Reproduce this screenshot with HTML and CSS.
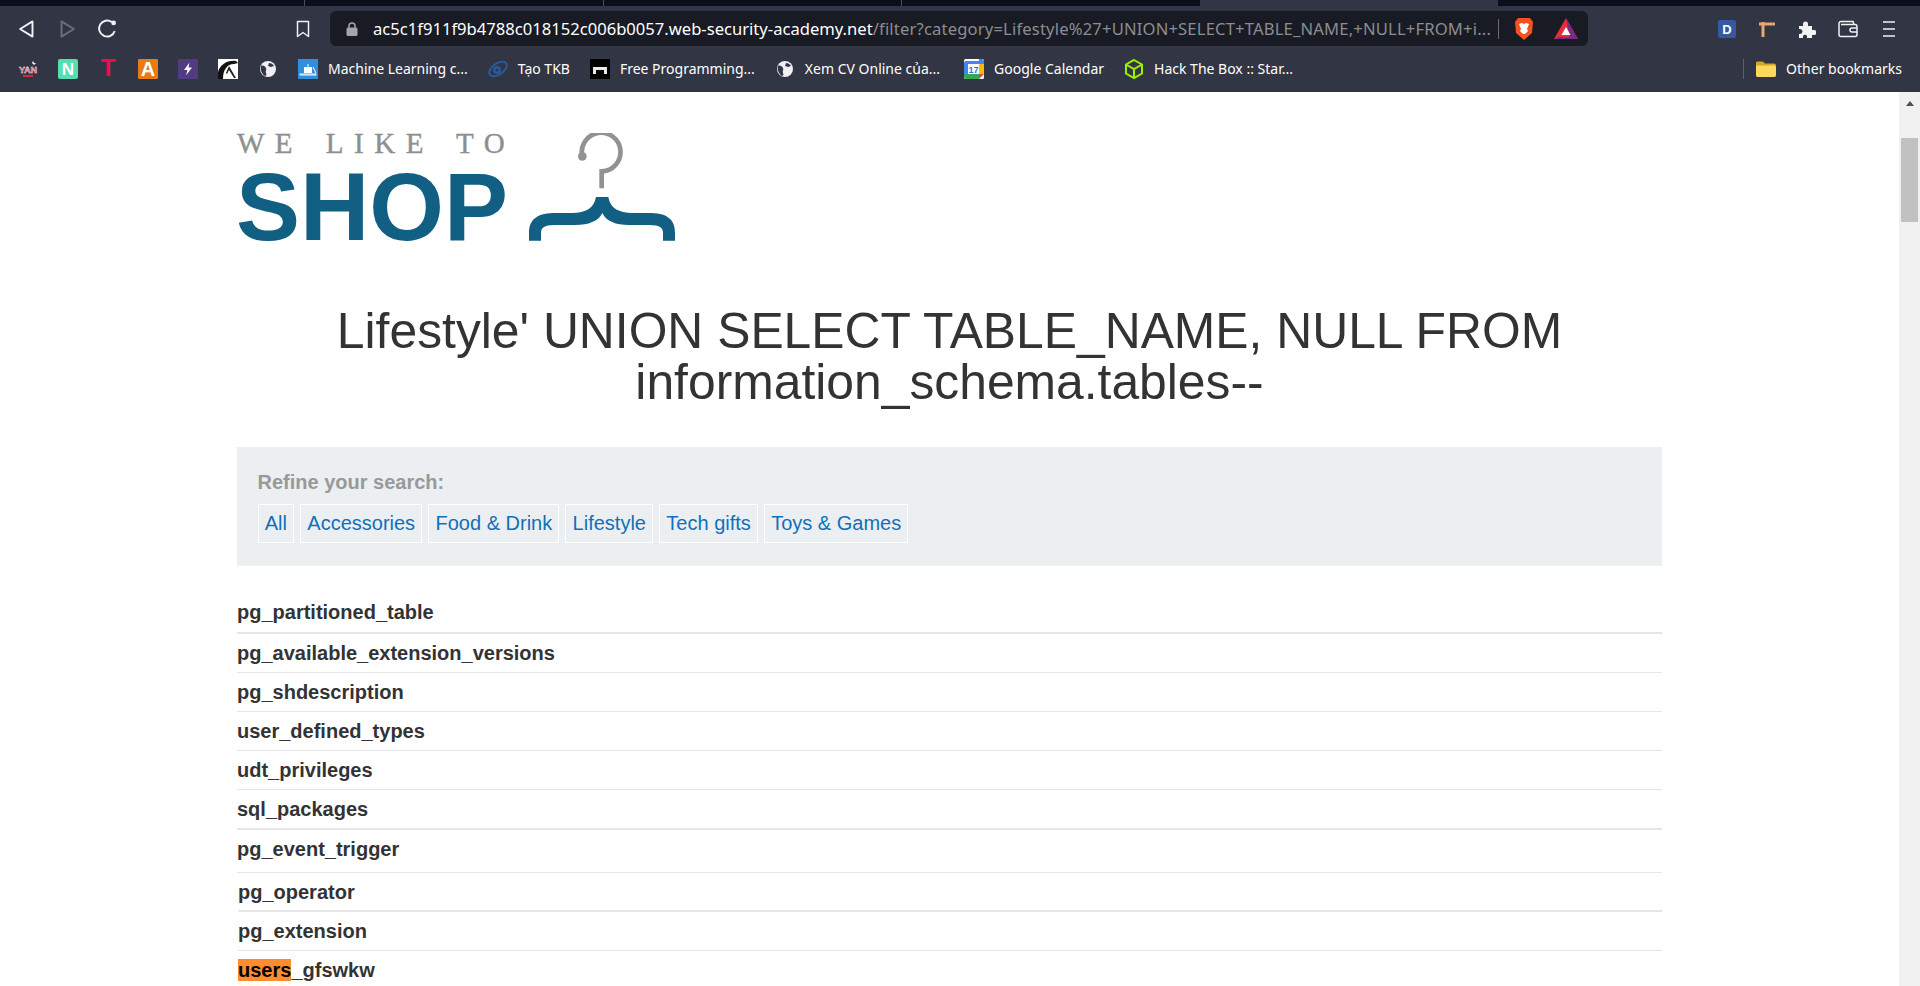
FILE: index.html
```html
<!DOCTYPE html>
<html lang="en">
<head>
  <meta charset="UTF-8" />
  <title>Filter: Lifestyle</title>
  <link rel="stylesheet" href="styles.css">
</head>
<body>
  <div class="tabstrip">
    <div class="tab tab-a"></div>
    <div class="tab tab-b"></div>
    <div class="tab tab-c"></div>
    <div class="tab tab-active"></div>
    <div class="tab tab-rest"></div>
  </div>

  <div class="toolbar">
    <div class="nav">
      <svg class="nav-icon" viewBox="0 0 16 16"><path d="M12 2.500v11L3 8z" fill="none" stroke="#f1f1f3" stroke-width="1.400" stroke-linejoin="round"/></svg>
      <svg class="nav-icon" viewBox="0 0 16 16"><path d="M4 2.500v11L13 8z" fill="none" stroke="#6b6e78" stroke-width="1.400" stroke-linejoin="round"/></svg>
      <svg class="nav-icon" viewBox="0 0 16 16"><path d="M13.600 9.400A5.800 5.800 0 1 1 11.500 3" fill="none" stroke="#f1f1f3" stroke-width="1.400"/><circle cx="12.800" cy="3.600" r="1.700" fill="#f1f1f3"/></svg>
    </div>
    <svg class="star" viewBox="0 0 14 18"><path d="M1.500 1.500h11v15L7 12.500l-5.500 4z" fill="none" stroke="#f1f1f3" stroke-width="1.500" stroke-linejoin="round"/></svg>
    <div class="urlbar">
      <svg class="lock" viewBox="0 0 12 14"><path d="M3 6V4a3 3 0 0 1 6 0v2" fill="none" stroke="#a3a5ab" stroke-width="1.500"/><rect x="0.500" y="5.500" width="11" height="8.500" rx="1.500" fill="#a3a5ab"/></svg>
      <div class="url"><span class="host">ac5c1f911f9b4788c018152c006b0057.web-security-academy.net</span>/filter?category=Lifestyle%27+UNION+SELECT+TABLE_NAME,+NULL+FROM+i...</div>
      <span class="url-sep"></span>
      <svg class="brave" viewBox="0 0 20 24"><path d="M4 1h12l3 4-1 11-8 7-8-7L1 5z" fill="#f4511e"/><path d="M5 7l3-1 2 1 2-1 3 1-2 5 1 2-3 3h-2l-3-3 1-2z" fill="#fff"/></svg>
      <svg class="bat" viewBox="0 0 24 22"><path d="M12 0L24 21H0z" fill="#e2303a"/><path d="M12 0L24 21H16z" fill="#7b2a86"/><path d="M0 21l5-2h14l5 2z" fill="#7b2a86"/><path d="M12 9l4.500 8h-9z" fill="#fff"/></svg>
    </div>
    <div class="ext">
      <svg class="ext-icon" viewBox="0 0 18 18"><rect width="18" height="18" rx="2" fill="#35589f"/><text x="9" y="14" class="ext-d">D</text></svg>
      <svg class="ext-icon" viewBox="0 0 18 18"><path d="M5 2v15M1 4h16" stroke="#e8a673" stroke-width="3" fill="none"/></svg>
      <svg class="ext-icon" viewBox="0 0 18 18"><path d="M1 6h4V4a2.500 2.500 0 0 1 5 0v2h4v4h2a2.500 2.500 0 0 1 0 5h-2v3H9v-2a2.200 2.200 0 0 0-4 0v2H1v-4h1a2.500 2.500 0 0 0 0-5H1z" fill="#f3f3f5"/></svg>
      <svg class="ext-icon ext-wide" viewBox="0 0 20 18"><path d="M3 1.500h12l1 3M3 1.500a2 2 0 0 0-2 2v11a2 2 0 0 0 2 2h14a2 2 0 0 0 2-2v-8a2 2 0 0 0-2-2H3M19 8h-5a2 2 0 0 0 0 4h5" fill="none" stroke="#f1f1f3" stroke-width="1.500"/></svg>
      <svg class="ext-icon" viewBox="0 0 18 18"><path d="M3 2h12M3 9h12M3 16h12" stroke="#f1f1f3" stroke-width="1.500"/></svg>
    </div>
  </div>

  <div class="bookmarks">
    <a class="bm"><svg class="fav" viewBox="0 0 20 20"><text x="10" y="14" class="fav-yan">YAN</text><path d="M15 2l1 2 2 0-2 2-2-2z" fill="#fff"/><rect x="5" y="16" width="10" height="2" fill="#d9283c"/></svg></a>
    <a class="bm"><svg class="fav" viewBox="0 0 20 20"><rect width="20" height="20" rx="2" fill="#55dfb0"/><text x="10" y="16" class="fav-n">N</text></svg></a>
    <a class="bm"><svg class="fav" viewBox="0 0 20 20"><text x="10" y="16.500" class="fav-t">T</text></svg></a>
    <a class="bm"><svg class="fav" viewBox="0 0 20 20"><rect width="20" height="20" rx="1" fill="#e97b12"/><text x="10" y="17" class="fav-a">A</text></svg></a>
    <a class="bm"><svg class="fav" viewBox="0 0 20 20"><rect width="20" height="20" fill="#523b80"/><path d="M11.500 3.500L6 11h3.500L8 16.500 14 8.500h-3.500z" fill="#fff"/></svg></a>
    <a class="bm"><svg class="fav" viewBox="0 0 20 20"><rect width="20" height="20" fill="#fff"/><path d="M0 20V13C2 6 9 1 18 2l2 2-4 1C9 5 5 11 5 20z" fill="#111"/><path d="M8 14l3-7 7 12h-2l-5-8-2 4z" fill="#222"/></svg></a>
    <a class="bm"><svg class="fav" viewBox="0 0 20 20"><circle cx="10" cy="10" r="8" fill="#f0f0f2"/><path d="M3 7c2-1 4 0 5 2s-1 3 0 5 0 3-1 3c-3-2-5-6-4-10zM11 4c2 0 4 1 5 3l-3 1-3-1z" fill="#32364a"/></svg></a>
    <a class="bm"><svg class="fav" viewBox="0 0 20 20"><rect width="20" height="20" fill="#2f8ede"/><rect x="6" y="8" width="8" height="6" fill="#fff"/><path d="M2 15h16v1H2zM10 5v3M15 8l3 6" stroke="#fff" fill="none"/></svg><span>Machine Learning c...</span></a>
    <a class="bm"><svg class="fav" viewBox="0 0 20 20"><ellipse cx="10" cy="10" rx="10" ry="5.500" transform="rotate(-35 10 10)" fill="none" stroke="#2b5a9c" stroke-width="2"/><circle cx="9" cy="11" r="4" fill="#2b5a9c"/><circle cx="9" cy="11" r="1.500" fill="#32364a"/></svg><span>Tạo TKB</span></a>
    <a class="bm"><svg class="fav" viewBox="0 0 20 20"><rect width="20" height="20" fill="#000"/><path d="M3 15V8h14v7h-3v-4H6v4z" fill="#e8e8e8"/></svg><span>Free Programming...</span></a>
    <a class="bm"><svg class="fav" viewBox="0 0 20 20"><circle cx="10" cy="10" r="8" fill="#f0f0f2"/><path d="M3 7c2-1 4 0 5 2s-1 3 0 5 0 3-1 3c-3-2-5-6-4-10zM11 4c2 0 4 1 5 3l-3 1-3-1z" fill="#32364a"/></svg><span>Xem CV Online của...</span></a>
    <a class="bm bm-cal"><svg class="fav" viewBox="0 0 20 20"><rect width="20" height="20" rx="1.500" fill="#fff"/><path d="M0 4a2 2 0 0 1 2-2h13v3H4v11H0z" fill="#4285f4"/><path d="M15 0h3a2 2 0 0 1 2 2v13h-5z" fill="#4285f4"/><path d="M15 5h5v10h-5z" fill="#fbbc04"/><path d="M0 15h15v5H2a2 2 0 0 1-2-2z" fill="#34a853"/><path d="M15 15h5l-5 5z" fill="#ea4335"/><text x="9.500" y="14" class="fav-cal">17</text></svg><span>Google Calendar</span></a>
    <a class="bm"><svg class="fav" viewBox="0 0 20 20"><path d="M10 1l8 4.500v9L10 19l-8-4.500v-9zM2 5.500l8 4.500 8-4.500M10 10v9" fill="none" stroke="#9fef00" stroke-width="2"/></svg><span>Hack The Box :: Star...</span></a>
    <div class="bm-other">
      <span class="bm-sep"></span>
      <a class="bm"><svg class="fav" viewBox="0 0 20 18"><path d="M1 1.500h6l2 2h9a2 2 0 0 1 2 2V15a2 2 0 0 1-2 2H2a2 2 0 0 1-2-2V2.500z" fill="#d6a526"/><path d="M0 5.500h18.500a1.500 1.500 0 0 1 1.500 1.500v8a2 2 0 0 1-2 2H2a2 2 0 0 1-2-2z" fill="#fbd95f"/></svg><span>Other bookmarks</span></a>
    </div>
  </div>

  <div class="viewport">
    <div class="page">
      <div class="logo">
        <div class="logo-text">
          <div class="logo-top">WE LIKE TO</div>
          <div class="logo-shop">SHOP</div>
        </div>
        <svg class="hanger" viewBox="0 0 438 324">
          <path d="M160 70A58 58 0 1 1 218 115V166" fill="none" stroke="#929292" stroke-width="14"/>
          <circle cx="160" cy="70" r="13" fill="#929292"/>
          <path d="M0 323V300C0 255 30 240 80 240H130C170 240 195 225 201 192H238C243 225 270 240 310 240H360C410 240 438 255 438 300V323H402V300C402 285 395 276 360 276H300C260 276 232 265 220 240C208 265 178 276 140 276H75C45 276 36 285 36 300V323Z" fill="#125f84"/>
        </svg>
      </div>

      <h1>Lifestyle' UNION SELECT TABLE_NAME, NULL FROM information_schema.tables--</h1>

      <section class="filters">
        <div class="filters-label">Refine your search:</div>
        <div class="filters-list">
          <a>All</a>
          <a>Accessories</a>
          <a>Food &amp; Drink</a>
          <a>Lifestyle</a>
          <a>Tech gifts</a>
          <a>Toys &amp; Games</a>
        </div>
      </section>

      <div class="results">
        <div class="row thick">pg_partitioned_table</div>
        <div class="row">pg_available_extension_versions</div>
        <div class="row">pg_shdescription</div>
        <div class="row">user_defined_types</div>
        <div class="row">udt_privileges</div>
        <div class="row thick">sql_packages</div>
        <div class="row tall">pg_event_trigger</div>
        <div class="row shifted thick">pg_operator</div>
        <div class="row shifted">pg_extension</div>
        <div class="row shifted"><mark>users</mark>_gfswkw</div>
      </div>
    </div>
    <div class="scrollbar">
      <div class="scroll-up"></div>
      <div class="scroll-thumb"></div>
    </div>
  </div>
</body>
</html>
```

FILE: styles.css
```css
* {
  margin: 0;
  padding: 0;
  box-sizing: border-box;
}
html, body {
  height: 100%;
  overflow: hidden;
}
body {
  display: flex;
  flex-direction: column;
  background: #fff;
  font-family: "Liberation Sans", Arial, sans-serif;
  color: #333;
}

/* browser chrome */
.tabstrip {
  display: flex;
  height: 6px;
  background: #0c0d1a;
}
.tab {
  height: 6px;
  border-right: 1px solid #4a4c58;
}
.tab-a { width: 305px; }
.tab-b { width: 299px; }
.tab-c { width: 298px; }
.tab-active {
  width: 298px;
  margin-left: 298px;
  background: #323644;
  border: none;
}
.tab-rest { border: none; }

.toolbar {
  display: flex;
  align-items: center;
  height: 46px;
  padding: 5px 0 6px 0;
  background: #323644;
}
.nav {
  display: flex;
  gap: 18px;
  padding-left: 16px;
}
.nav-icon {
  width: 22px;
  height: 22px;
}
.star {
  flex: none;
  width: 14px;
  height: 18px;
  margin-left: 178px;
}
.urlbar {
  display: flex;
  align-items: center;
  width: 1258px;
  height: 35px;
  margin-left: 20px;
  background: #181b23;
  border-radius: 6px;
}
.lock {
  width: 12px;
  height: 14px;
  margin-left: 16px;
}
.url {
  margin-left: 15px;
  width: 1119px;
  font-family: "Noto Sans", sans-serif;
  font-size: 16.600px;
  letter-spacing: 0.170px;
  color: #8b8d92;
  white-space: nowrap;
  overflow: hidden;
}
.host {
  letter-spacing: 0;
  color: #fff;
}
.url-sep {
  width: 1px;
  height: 20px;
  margin-left: 6px;
  background: #6b6d75;
}
.brave {
  width: 20px;
  height: 24px;
  margin-left: 15px;
}
.bat {
  width: 24px;
  height: 22px;
  margin-left: 20px;
}
.ext {
  display: flex;
  align-items: center;
  gap: 22px;
  margin-left: 130px;
}
.ext-icon {
  width: 18px;
  height: 18px;
}
.ext-wide {
  width: 20px;
}
.ext-d {
  font: bold 13px "Liberation Sans", sans-serif;
  fill: #fff;
  text-anchor: middle;
}

.bookmarks {
  display: flex;
  align-items: center;
  height: 40px;
  padding: 0 8px 7px 8px;
  background: #323644;
}
.bm {
  display: flex;
  align-items: center;
  gap: 10px;
  padding: 0 10px;
  font-family: "Noto Sans", sans-serif;
  font-size: 14px;
  color: #fff;
  white-space: nowrap;
}
.bm-cal {
  margin-left: 4px;
}
.fav {
  flex: none;
  width: 20px;
  height: 20px;
  overflow: visible;
}
.fav-yan {
  font: bold 9px "Liberation Sans", sans-serif;
  fill: #d9283c;
  stroke: #fff;
  stroke-width: 0.400;
  text-anchor: middle;
}
.fav-n {
  font: bold 17px "Liberation Sans", sans-serif;
  fill: #fff;
  text-anchor: middle;
}
.fav-t {
  font: bold 24px "Liberation Sans", sans-serif;
  fill: #f50a50;
  text-anchor: middle;
}
.fav-a {
  font: bold 20px "Liberation Sans", sans-serif;
  fill: #fff;
  text-anchor: middle;
}
.fav-cal {
  font: bold 9px "Liberation Sans", sans-serif;
  fill: #1a73e8;
  text-anchor: middle;
}
.bm-other {
  display: flex;
  align-items: center;
  margin-left: auto;
}
.bm-sep {
  width: 1px;
  height: 20px;
  margin-right: 2px;
  background: #5c5f6b;
}

/* page */
.viewport {
  flex: 1;
  display: flex;
  min-height: 0;
}
.page {
  flex: 1;
  padding: 40px 237px 0 237px;
  overflow: hidden;
}
.scrollbar {
  width: 21px;
  padding: 0 2px;
  background: #f1f1f1;
}
.scroll-up {
  width: 0;
  height: 0;
  margin: 9px auto 32px auto;
  border-left: 4.500px solid transparent;
  border-right: 4.500px solid transparent;
  border-bottom: 5px solid #505050;
}
.scroll-thumb {
  height: 84px;
  background: #c1c1c1;
}

.logo {
  display: flex;
  align-items: flex-end;
  gap: 24px;
  height: 112px;
}
.logo-text {
  flex: none;
  width: 268px;
}
.logo-top {
  margin-bottom: 15px;
  font-family: "Liberation Serif", serif;
  font-size: 29px;
  line-height: 24px;
  letter-spacing: 10.500px;
  word-spacing: 5px;
  color: #8f8f8f;
  -webkit-text-stroke: 0.400px #8f8f8f;
  white-space: nowrap;
}
.logo-shop {
  margin-left: -1px;
  font-size: 96px;
  font-weight: bold;
  line-height: 74px;
  color: #125f84;
}
.hanger {
  width: 146px;
  height: 108px;
  margin-bottom: 3px;
}

h1 {
  margin: 62px 0 38.500px 0;
  font-size: 49.800px;
  font-weight: normal;
  line-height: 51px;
  text-align: center;
  color: #333;
}

.filters {
  height: 119px;
  padding: 24px 21px 0 20.500px;
  background: #ebeff2;
}
.filters-label {
  height: 33px;
  font-size: 20px;
  font-weight: bold;
  line-height: 22px;
  color: #999;
}
.filters-list {
  display: flex;
  gap: 6px;
}
.filters-list a {
  padding: 0 6.200px;
  font-size: 20px;
  line-height: 37px;
  color: #0f71bb;
  border: 1px solid #fff;
}

.results {
  margin-top: 29px;
}
.row {
  height: 39.200px;
  padding-top: 7px;
  font-size: 20px;
  font-weight: bold;
  line-height: 24px;
  color: #333;
  border-bottom: 1px solid #e6e6e6;
}
.row:first-child {
  padding-top: 5px;
}
.thick {
  border-bottom-width: 2px;
}
.tall {
  height: 43px;
}
.shifted {
  margin-left: 1px;
}
mark {
  background: #ff8c2e;
  color: #000;
}
```
